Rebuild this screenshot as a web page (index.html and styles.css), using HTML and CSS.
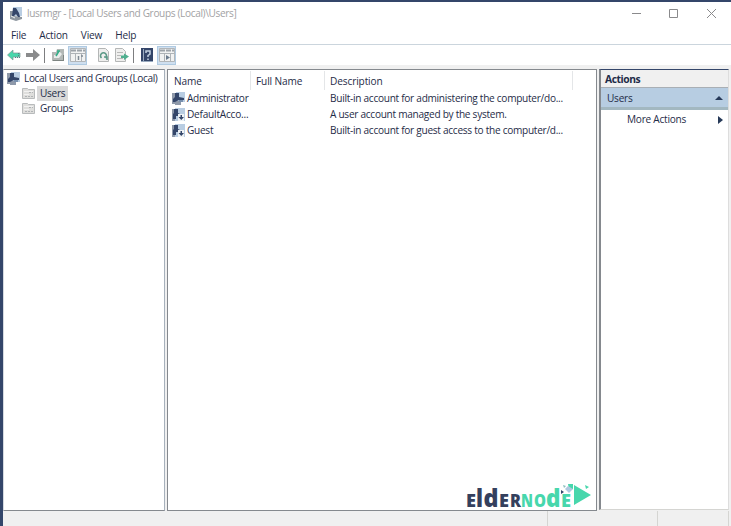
FILE: index.html
```html
<!DOCTYPE html>
<html lang="en">
<head>
<meta charset="utf-8">
<title>lusrmgr</title>
<link rel="stylesheet" href="styles.css">
</head>
<body>
<svg class="defs" width="0" height="0">
  <symbol id="user" viewBox="0 0 13 13"><path fill="#b9cde2" d="M4 0h9v10H4z"/><path fill="#8e99aa" d="M0 1h3v11H0zM3 9h6v4H3z"/><path fill="#34466a" d="M3 1h4v4l5 1v2H7L3 10H1V7l2-2z"/><path fill="#7890ae" d="M7 8h4v2H7z"/></symbol>
  <symbol id="disabled" viewBox="0 0 13 13"><path fill="#b9cde2" d="M3 0h10v13H3z"/><path fill="#8e99aa" d="M0 1h3v12H0z"/><path fill="#34466a" d="M2 1h4v4l2 1v2H4v3H1V6l1-1z"/><path fill="#eef2f5" d="M6 6h6v7H6z"/><path fill="#34466a" d="M8.500 7h1.500v2h2l-2.700 3L6.500 9h2z"/></symbol>
  <symbol id="folder" viewBox="0 0 13 12"><path fill="#dededc" stroke="#b8bbbc" d="M.5 1.500h5l1 1h6v9H.5z"/><path stroke="#f2f2f2" d="M2 4.500h9M2 7.500h5"/><path stroke="#b0b3b5" d="M7 5.500h4M3 9.500h8" stroke-dasharray="2 1"/></symbol>
  <symbol id="pane" viewBox="0 0 16 14"><path fill="#f1f2f2" stroke="#b2b6b9" d="M.5.5h15v13H.5z"/><path stroke="#9ca2a8" stroke-width="2" stroke-dasharray="5 1" d="M1 2.500h14"/><path stroke="#aeb3b7" d="M1 5.500h14M5.500 6v7M11.500 6v7"/></symbol>
</svg>
<div class="window">
  <header class="title">
    <svg class="app" width="14" height="14" viewBox="0 0 14 14"><path fill="#b9cde2" d="M4 0h9v9H4z"/><path fill="#8d969f" d="M1 4h4v5l8 1v2l-6 2-6-2z"/><path fill="#34466a" d="M4 1h3l3 5 1 4H9L7 7 5 9H3z"/><path stroke="#eef1f4" d="m2 9 4 2"/></svg>
    <span class="caption">lusrmgr - [Local Users and Groups (Local)\Users]</span>
    <svg class="controls" width="94" height="14" viewBox="0 0 94 14" fill="none" stroke="#8a8a8c"><path d="M5 6.500h9M42.500 2.500h8v8h-8zM80 2l9 9m0-9-9 9"/></svg>
  </header>
  <nav class="menu"><span>File</span><span>Action</span><span>View</span><span>Help</span></nav>
  <div class="toolbar">
    <svg width="14" height="12" viewBox="0 0 14 12"><path fill="#47d7ac" stroke="#7c9694" stroke-width=".7" d="M.5 6 6 1v3h7v4H6v3z"/><path stroke="#557c88" stroke-dasharray="1 1" d="M8 8.500h5M11.500 4v4"/></svg>
    <svg class="forward" width="14" height="12" viewBox="0 0 14 12"><path fill="#8a8b8c" d="M0 4h7V0l7 6-7 6V8H0z"/></svg>
    <i class="sep"></i>
    <svg class="up" width="13" height="14" viewBox="0 0 13 14"><path fill="#b3b8b6" d="M0 4h4l1-3h7v12H0z"/><path fill="#e9eceb" d="M2 7h3l2-4 3 3-3 4H2z"/><path stroke="#34ae88" stroke-width="1.500" fill="none" d="M4 8 7 3M5 3h3"/><path stroke="#7e8582" d="M1 12.500h11M11.500 7v5"/></svg>
    <span class="pressed"><svg width="16" height="14"><use href="#pane"/><path stroke="#7f8a94" stroke-width="1.500" d="M8.500 8v4M13 8h-2"/></svg></span>
    <svg class="refresh" width="11" height="14" viewBox="0 0 11 14"><path fill="#efefee" stroke="#b4b6b6" d="M.5.5h7l3 3v10H.5z"/><path fill="none" stroke="#5c9987" stroke-width="1.600" d="M3.500 10a3 3 0 1 1 4 0M6 9h3v3"/></svg>
    <svg class="export" width="14" height="14" viewBox="0 0 14 14"><path fill="#efefee" stroke="#b4b6b6" d="M.5.5h7l3 3v10H.5z"/><path stroke="#b9b9b8" d="M2 4.500h6M2 7.500h4M2 10.500h6"/><path fill="#4faf8f" d="M6 7.500h3V5.500l5 3L9 12v-2H6z"/></svg>
    <i class="sep second"></i>
    <svg class="help" width="12" height="14" viewBox="0 0 12 14"><path fill="#34466a" d="M0 0h12v14H0z"/><path stroke="#9aabc0" d="M2.500 1v12M0 13.500h12"/><path fill="none" stroke="#c3d2e2" stroke-width="1.500" d="M5 5V3h4v3L7 7.500V9M7 10.500V12"/></svg>
    <span class="pressed last"><svg width="16" height="14"><use href="#pane"/><path fill="#6c7c8e" d="M7 7l4 2.500L7 12z"/></svg></span>
  </div>
  <main>
    <section class="tree">
      <div class="root"><svg width="13" height="13"><use href="#user"/></svg><span class="tree-label">Local Users and Groups (Local)</span></div>
      <div class="node"><svg width="13" height="12"><use href="#folder"/></svg><span class="selected">Users</span></div>
      <div class="node"><svg width="13" height="12"><use href="#folder"/></svg><span>Groups</span></div>
    </section>
    <section class="list">
      <div class="row head"><span>Name</span><span>Full Name</span><span>Description</span></div>
      <div class="row"><span class="name"><svg width="13" height="13"><use href="#user"/></svg><b>Administrator</b></span><span></span><span>Built-in account for administering the computer/do...</span></div>
      <div class="row"><span class="name"><svg width="13" height="13"><use href="#disabled"/></svg><b class="wide">DefaultAcco...</b></span><span></span><span>A user account managed by the system.</span></div>
      <div class="row"><span class="name"><svg width="13" height="13"><use href="#disabled"/></svg><b>Guest</b></span><span></span><span>Built-in account for guest access to the computer/d...</span></div>
      <svg class="logo" width="128" height="36" viewBox="464 475 128 36">
        <g class="logo-type" fill="#34405d">
          <text x="466" y="508" class="cap" textLength="10" lengthAdjust="spacingAndGlyphs">E</text>
          <text x="476" y="508" class="tall" textLength="7" lengthAdjust="spacingAndGlyphs">l</text>
          <text x="483.500" y="508" class="tall" textLength="15" lengthAdjust="spacingAndGlyphs">d</text>
          <text x="499" y="508" class="cap" textLength="10" lengthAdjust="spacingAndGlyphs">E</text>
          <text x="510" y="508" class="cap" textLength="11" lengthAdjust="spacingAndGlyphs">R</text>
        </g>
        <g class="logo-type" fill="#47d7ac">
          <text x="521" y="508" class="cap" textLength="12" lengthAdjust="spacingAndGlyphs">N</text>
          <text x="534" y="508" class="cap" textLength="12" lengthAdjust="spacingAndGlyphs">O</text>
          <text x="546" y="508" class="tall" textLength="14.500" lengthAdjust="spacingAndGlyphs">d</text>
          <text x="561" y="508" class="cap" textLength="10" lengthAdjust="spacingAndGlyphs">E</text>
        </g>
        <path fill="#47d7ac" d="M574 486v20l17-10zM585 486l4 2-3 2zM568 485h5v5l-4 1z"/><path fill="#afc8df" d="m568 487 5 3-4 4-4-4z"/><path fill="#34466a" d="m561 491 3 2-3 2z"/><path fill="#8bbfc0" d="m563 486 3 1-2 2z"/>
      </svg>
    </section>
    <aside>
      <h2>Actions</h2>
      <div class="group"><span>Users</span><svg width="8" height="6"><path fill="#263958" d="m0 5 4-4 4 4z"/></svg></div>
      <div class="more"><span>More Actions</span><svg width="5" height="8"><path fill="#263958" d="m0 0 5 4-5 4z"/></svg></div>
    </aside>
  </main>
  <footer><span></span><span></span><span></span></footer>
</div>
</body>
</html>
```
FILE: styles.css
```css
* { box-sizing: border-box; }
body { margin: 0; width: 731px; height: 526px; overflow: hidden; background: #f0f0f0; color: #1f2c48; font: 500 10.1px/15px "Open Sans", "Noto Sans", sans-serif; letter-spacing: -.28px; white-space: nowrap; }
.defs { position: absolute; }
svg { display: block; flex: none; }
.window { height: 526px; display: flex; flex-direction: column; border-left: 3px solid #34466a; border-top: 2px solid #34466a; }
.title { height: 24px; display: flex; align-items: center; padding: 0 10px 0 6px; background: #fff; color: #a2a2a4; }
.caption { margin-left: 4px; letter-spacing: -.36px; }
.controls { margin-left: auto; }
.menu { height: 18px; display: flex; padding: 2px 0 0 8px; gap: 13px; background: #fff; letter-spacing: -.18px; }
.toolbar { height: 21px; display: flex; align-items: center; padding: 1px 0 0 4px; border-top: 1px solid #cbd5dd; background: #fff; }
.forward { margin-left: 5px; }
.sep { width: 1px; height: 15px; margin-left: 4px; background: #7d7e80; }
.up { margin-left: 7px; }
.pressed { width: 19px; height: 19px; margin-left: 3px; border: 1px solid #afcae2; background: #cfdfef; display: grid; place-items: center; }
.refresh { margin-left: 11px; }
.export { margin-left: 6px; }
.second { margin-left: 4px; }
.help { margin-left: 7px; }
.last { margin-left: 4px; }
main { height: 447px; padding-top: 4px; display: grid; grid-template-columns: 162px 430px 130px; column-gap: 2px; }
.tree, .list { border: 1px solid #85898e; background: #fff; }
.tree { padding: 1px 0 0 3px; border-left-color: #d5dae0; border-right-color: #a7b1bc; }
.root, .node { display: flex; align-items: center; height: 15px; }
.root { gap: 4px; letter-spacing: -.37px; }
.node { padding-left: 15px; gap: 2px; }
.node span { padding: 0 3px; }
.node .selected { background: #d9d9d9; }
.list { position: relative; }
.row { display: grid; grid-template-columns: 82px 74px 1fr; height: 16px; align-items: center; padding-left: 6px; }
.row.head { height: 21px; letter-spacing: -.12px; }
.head span { height: 19px; line-height: 21px; margin-right: 5px; border-right: 1px solid #e4e6e8; }
.head span:last-child { width: 243px; }
.name { display: flex; align-items: center; margin-left: -2px; gap: 2px; }
b { font-weight: 500; }
.wide { letter-spacing: -.22px; }
.logo { position: absolute; right: 4px; bottom: 0; overflow: visible; }
.logo-type { font-family: "Open Sans", sans-serif; font-weight: 800; letter-spacing: 0; }
.cap { font-size: 17px; }
.tall { font-size: 25px; }
aside { margin-bottom: 1px; border-left: 2px solid #85898e; border-top: 1px solid #34466a; border-right: 1px solid #ddd; border-bottom: 1px solid #d5d5d2; background: #fff; letter-spacing: -.25px; }
h2 { margin: 0; height: 18px; padding: 2px 0 0 4px; font: 700 10.3px/15px "Open Sans", sans-serif; border-bottom: 1px solid #a9afb5; background: #f0f0f0; letter-spacing: -.45px; }
.group { height: 22px; padding: 2px 5px 0 6px; display: flex; align-items: center; justify-content: space-between; background: #b7cde2; border-bottom: 3px solid #a3b8c1; }
.more { height: 20px; display: flex; align-items: center; justify-content: space-between; padding: 0 5px 0 26px; }
footer { height: 15px; display: grid; grid-template-columns: 545px 110px 71px; }
footer span { border-right: 1px solid #d5d5d2; }
```
